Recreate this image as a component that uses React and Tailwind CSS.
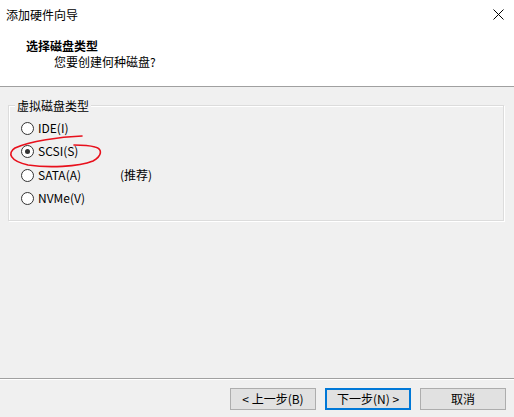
import React from 'react';

const options = [
    { label: 'IDE(I)', top: 'mt-[14px]' },
    { label: 'SCSI(S)', top: 'mt-[7px]', checked: true },
    { label: 'SATA(A)', top: 'mt-[8px]', note: '(推荐)' },
    { label: 'NVMe(V)', top: 'mt-[7px]' },
];

const Radio = ({ checked }) => (
    <span className="w-[13px] h-[13px] rounded-full border border-[#333333] bg-white flex items-center justify-center shrink-0">
        {checked && <span className="w-[5px] h-[5px] rounded-full bg-[#333333]" />}
    </span>
);

const App = () => {
    return (
        <div className="w-[514px] h-[417px] bg-[#f0f0f0] relative flex flex-col text-[12px] leading-[16px] text-black font-['Noto_Sans_CJK_SC','Microsoft_YaHei',sans-serif] overflow-hidden">
            {/* header */}
            <div className="h-[87px] bg-white border-b border-[#a0a0a0] shrink-0">
                <div className="flex justify-between pt-[7px] pl-[6px] pr-[10px]">
                    <span>添加硬件向导</span>
                    <svg width="11" height="11" viewBox="0 0 11 11" className="mt-[2px]">
                        <path d="M0.5 0.5 L10.5 10.5 M10.5 0.5 L0.5 10.5" stroke="#000" strokeWidth="1" />
                    </svg>
                </div>
                <div className="mt-[15px] pl-[26px] font-bold">选择磁盘类型</div>
                <div className="pl-[54px]">您要创建何种磁盘?</div>
            </div>

            {/* body */}
            <div className="flex-1 pt-[18px] pl-[8px]">
                <div className="relative w-[496px] h-[116px] border border-[#dcdcdc] shadow-[inset_1px_1px_0_#ffffff,1px_1px_0_#ffffff]">
                    <span className="absolute -top-[8px] left-[6px] px-[2px] bg-[#f0f0f0]">虚拟磁盘类型</span>
                    <div className="flex flex-col pl-[12px]">
                        {options.map(opt => (
                            <div key={opt.label} className={`flex items-center h-[16px] ${opt.top}`}>
                                <Radio checked={opt.checked} />
                                <span className="ml-[4px] w-[82px]">{opt.label}</span>
                                {opt.note && <span>{opt.note}</span>}
                            </div>
                        ))}
                    </div>
                </div>
            </div>

            {/* footer */}
            <div className="h-[39px] shrink-0 border-t border-[#a0a0a0] shadow-[inset_0_1px_0_#ffffff] flex justify-end items-start gap-[9px] pt-[9px] pr-[8px]">
                <button className="w-[86px] h-[22px] border border-[#adadad] bg-[#e1e1e1] flex items-center justify-center">&lt; 上一步(B)</button>
                <button className="w-[86px] h-[22px] border-2 border-[#0078d7] bg-[#e1e1e1] flex items-center justify-center">下一步(N) &gt;</button>
                <button className="w-[86px] h-[22px] border border-[#adadad] bg-[#e1e1e1] flex items-center justify-center">取消</button>
            </div>

            {/* hand-drawn red mark */}
            <svg className="absolute left-0 top-0 pointer-events-none" width="514" height="417">
                <path
                    d="M82 136 C60 137, 30 141, 15 148 C7 153, 10 161, 28 165 C48 168, 78 167, 93 161 C102 156, 103 149, 95 147 C88 145, 80 145, 74 145"
                    fill="none"
                    stroke="#e8101c"
                    strokeWidth="1.6"
                    strokeLinecap="round"
                />
            </svg>
        </div>
    );
};

export default App;
